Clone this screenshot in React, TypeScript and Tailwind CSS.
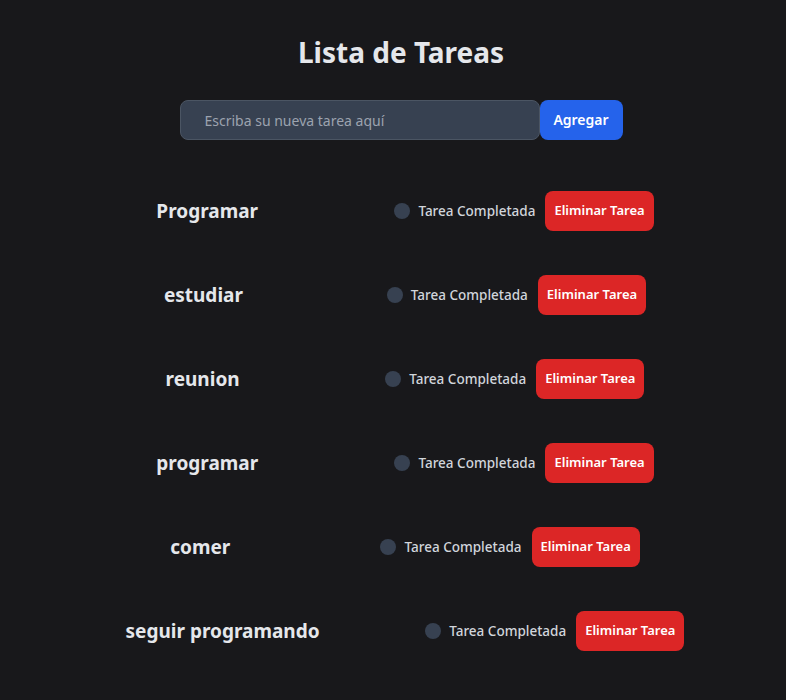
import { useState } from 'react'

const inicial = ['Programar', 'estudiar', 'reunion', 'programar', 'comer', 'seguir programando']

export default function App() {
  const [tareas] = useState(inicial)

  return (
    <div className="min-h-screen bg-[#18181b] pl-4 pt-[34px] pb-10 font-['Noto_Sans',sans-serif] overflow-hidden">
      {/* Encabezado */}
      <h1 className="text-center text-[28px] leading-9 font-bold text-[#e5e7eb]">Lista de Tareas</h1>

      {/* Formulario */}
      <form className="flex justify-center mt-[30px]" onSubmit={(e) => e.preventDefault()}>
        <input
          type="text"
          placeholder="Escriba su nueva tarea aquí"
          className="w-[360px] h-10 rounded-lg border border-[#4b5563] bg-[#374151] pl-6 text-sm text-[#e5e7eb] placeholder:text-[#9ca3af] outline-none"
        />
        <button className="h-10 w-[83px] rounded-lg bg-[#2563eb] text-sm font-semibold text-white">Agregar</button>
      </form>

      {/* Lista */}
      <ul className="mt-[51px] ml-[4px] -mr-[4px] flex flex-col gap-[44px]">
        {tareas.map((t, i) => (
          <li key={i} className="flex items-center justify-evenly">
            <h3 className="text-[19px] font-bold text-[#e5e7eb]">{t}</h3>
            <div className="flex items-center">
              <span className="w-4 h-4 rounded-full bg-[#374151]" />
              <span className="ml-2 text-[13.5px] font-medium text-[#d1d5db]">Tarea Completada</span>
              <button className="ml-2.5 h-10 px-[9px] rounded-lg bg-[#dc2626] text-[13px] font-semibold text-white">
                Eliminar Tarea
              </button>
            </div>
          </li>
        ))}
      </ul>
    </div>
  )
}
